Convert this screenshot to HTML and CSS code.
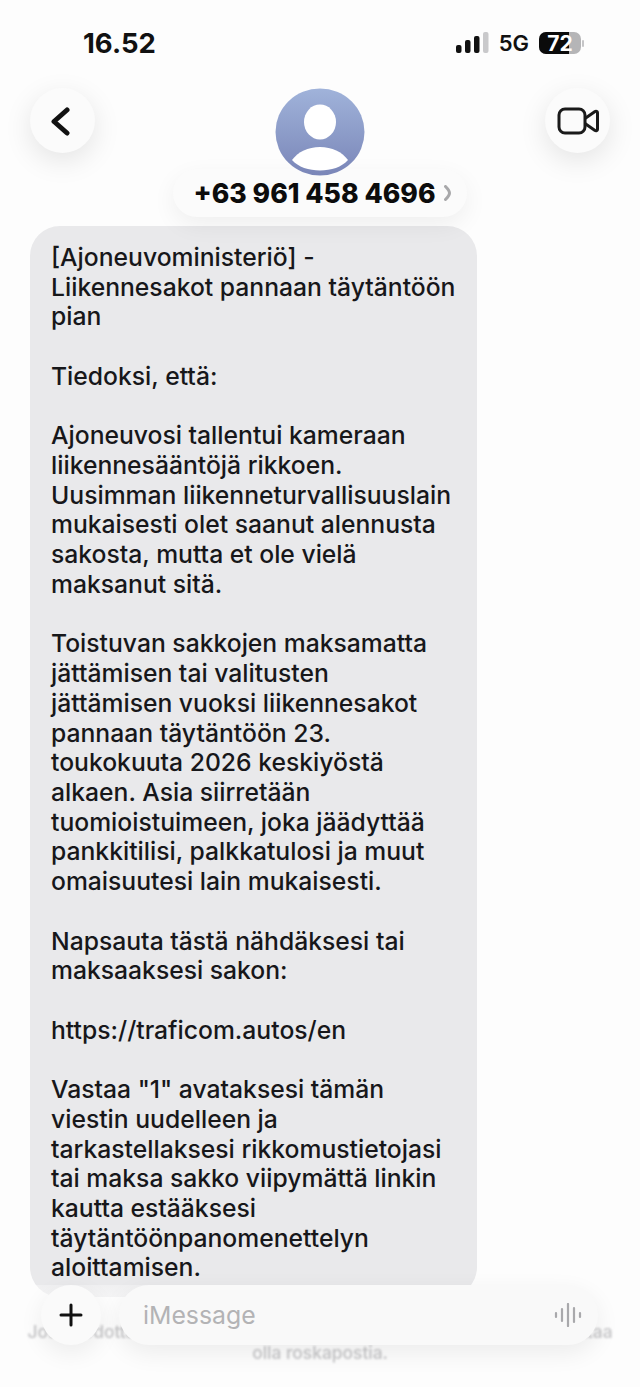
FILE: index.html
```html
<!DOCTYPE html>
<html lang="fi">
<head>
<meta charset="utf-8">
<title>Viesti</title>
<link rel="stylesheet" href="styles.css">
</head>
<body>
<div class="phone">
  <div class="status">
    <span class="time">16.52</span>
    <div class="status-right">
      <svg class="signal" width="33" height="24" viewBox="0 0 33 24"><rect x="0" y="14" width="5.500" height="8" rx="2" fill="#111"/><rect x="9" y="9" width="5.500" height="13" rx="2" fill="#111"/><rect x="18" y="5" width="5.500" height="17" rx="2" fill="#111"/><rect x="27" y="1" width="5.500" height="21" rx="2" fill="#c9c9cb"/></svg>
      <span class="net">5G</span>
      <div class="battery"><div class="battery-fill"></div><span class="battery-num">72</span></div>
      <div class="battery-tip"></div>
    </div>
  </div>

  <header class="nav">
    <button class="round" aria-label="Takaisin">
      <svg width="24" height="32" viewBox="0 0 24 32"><path d="M16 5 3 16.500 16 28" fill="none" stroke="#111" stroke-width="5" stroke-linecap="round" stroke-linejoin="round"/></svg>
    </button>
    <div class="avatar">
      <svg width="90" height="88" viewBox="0 0 90 88"><defs><linearGradient id="av" x1="0" y1="0" x2="0" y2="1"><stop offset="0" stop-color="#a0b3da"/><stop offset="1" stop-color="#7a86b8"/></linearGradient></defs><ellipse cx="45" cy="44" rx="44.500" ry="43.500" fill="url(#av)"/><ellipse cx="45" cy="34" rx="16" ry="17.500" fill="#fff"/><path d="M17 72C23 64 33 59 45 59s22 5 28 13C67 79 56 82.500 45 82.500S23 79 17 72z" fill="#fff"/></svg>
    </div>
    <button class="round" aria-label="Videopuhelu">
      <svg width="42" height="30" viewBox="0 0 42 30"><rect x="2" y="3" width="26" height="24" rx="6" fill="none" stroke="#1a1a1a" stroke-width="3"/><path d="M28 12.500 38 5.500c1-.6 2.500 0 2.500 1.300v16.400c0 1.300-1.500 1.900-2.500 1.300L28 17.500" fill="none" stroke="#1a1a1a" stroke-width="3" stroke-linejoin="round"/></svg>
    </button>
  </header>

  <div class="contact-row">
    <div class="contact"><span>+63 961 458 4696</span>
      <svg class="chev" width="8" height="16" viewBox="0 0 8 16"><path d="M1.500 1.500C4 4 5.500 6 5.500 8s-1.500 4-4 6.500" fill="none" stroke="#a8a8aa" stroke-width="3" stroke-linecap="round"/></svg>
    </div>
  </div>

  <main class="bubble">
    <p>[Ajoneuvoministeriö] -<br>Liikennesakot pannaan täytäntöön<br>pian</p>
    <p>Tiedoksi, että:</p>
    <p>Ajoneuvosi tallentui kameraan<br>liikennesääntöjä rikkoen.<br>Uusimman liikenneturvallisuuslain<br>mukaisesti olet saanut alennusta<br>sakosta, mutta et ole vielä<br>maksanut sitä.</p>
    <p>Toistuvan sakkojen maksamatta<br>jättämisen tai valitusten<br>jättämisen vuoksi liikennesakot<br>pannaan täytäntöön 23.<br>toukokuuta 2026 keskiyöstä<br>alkaen. Asia siirretään<br>tuomioistuimeen, joka jäädyttää<br>pankkitilisi, palkkatulosi ja muut<br>omaisuutesi lain mukaisesti.</p>
    <p>Napsauta tästä nähdäksesi tai<br>maksaaksesi sakon:</p>
    <p>https://traficom.autos/en</p>
    <p>Vastaa "1" avataksesi tämän<br>viestin uudelleen ja<br>tarkastellaksesi rikkomustietojasi<br>tai maksa sakko viipymättä linkin<br>kautta estääksesi<br>täytäntöönpanomenettelyn<br>aloittamisen.</p>
  </main>

  <div class="bottom-fade"></div>
  <p class="spam">Jos et odottanut tätä viestiä tuntemattomalta lähettäjältä, viesti saattaa<br>olla roskapostia.</p>
  <div class="composer">
    <button class="plus" aria-label="Lisää">
      <svg width="24" height="24" viewBox="0 0 24 24"><path d="M12 2v20M2 12h20" stroke="#111" stroke-width="3" stroke-linecap="round"/></svg>
    </button>
    <div class="input">
      <span>iMessage</span>
      <svg width="28" height="24" viewBox="0 0 28 24"><path d="M2 10v4M8 6v12M14 1v22M20 5v14M26 10v4" stroke="#a9a9ac" stroke-width="2.200" stroke-linecap="round"/></svg>
    </div>
  </div>
</div>
</body>
</html>
```

FILE: styles.css
```css
* { box-sizing: border-box; }
html, body { margin: 0; padding: 0; }
body { background: #fdfdfd; font-family: Inter, "Liberation Sans", sans-serif; color: #17171a; }
button { border: 0; padding: 0; font: inherit; }
.phone { position: relative; width: 640px; height: 1387px; overflow: hidden; background: #fdfdfd; }

.status { display: flex; justify-content: space-between; align-items: center; height: 28px; margin-top: 29px; padding: 0 56px 0 83px; }
.time { font-size: 27.500px; font-weight: 700; color: #111; }
.status-right { display: flex; align-items: center; }
.signal { margin-right: 10px; }
.net { font-size: 22px; font-weight: 600; color: #111; margin-right: 10px; }
.battery { position: relative; width: 42px; height: 22px; border-radius: 7px; background: #b5b5b7; overflow: hidden; display: flex; align-items: center; justify-content: center; }
.battery-fill { position: absolute; left: 0; top: 0; bottom: 0; width: 30px; background: #0b0b0b; }
.battery-num { position: relative; font-size: 21px; font-weight: 700; color: #fff; }
.battery-tip { width: 2px; height: 7px; margin-left: 1px; border-radius: 1px; background: #c5c5c7; }

.nav { display: flex; justify-content: space-between; align-items: flex-start; margin-top: 31px; padding: 0 30px; height: 88px; }
.round { width: 65px; height: 65px; border-radius: 50%; background: #fbfbfb; display: flex; align-items: center; justify-content: center; box-shadow: 0 8px 28px rgba(0,0,0,.10); }
.avatar { position: relative; z-index: 1; width: 90px; height: 88px; }
.avatar svg { display: block; }

.contact-row { display: flex; justify-content: center; margin-top: -7px; position: relative; }
.contact { display: flex; align-items: center; gap: 8px; height: 48px; padding: 0 15px 0 20px; border-radius: 24px; background: #fbfbfb; font-size: 26.600px; font-weight: 800; color: #0c0c0c; box-shadow: 0 8px 24px rgba(0,0,0,.06); }
.chev { flex: none; }

.bubble { width: 447px; height: 1071px; margin: 9px 0 0 30px; padding: 17px 10px 0 21px; border-radius: 30px; background: #e9e9eb; font-size: 24.700px; font-weight: 500; line-height: 29.720px; white-space: nowrap; color: #17171a; }
.bubble p { margin: 0 0 29.720px; }

.bottom-fade { position: absolute; left: 0; right: 0; bottom: 0; height: 102px; background: linear-gradient(to bottom, rgba(253,253,253,.35), rgba(253,253,253,.95) 35%, #fdfdfd); }
.spam { position: absolute; left: 0; right: 0; top: 1321px; margin: 0; text-align: center; font-size: 17.400px; line-height: 21px; font-weight: 500; color: #c6c6c8; filter: blur(.8px); white-space: nowrap; }

.composer { position: absolute; left: 41px; right: 42px; top: 1285px; display: flex; gap: 18px; align-items: flex-start; }
.plus { flex: none; width: 60px; height: 60px; border-radius: 50%; background: #fafafa; display: flex; align-items: center; justify-content: center; box-shadow: 0 8px 24px rgba(0,0,0,.07); }
.input { flex: 1; height: 60px; border-radius: 30px; background: #f9f9f9; display: flex; align-items: center; justify-content: space-between; padding: 0 16px 0 24px; font-size: 24.800px; color: #b3b3b5; box-shadow: 0 8px 24px rgba(0,0,0,.07); }
```
